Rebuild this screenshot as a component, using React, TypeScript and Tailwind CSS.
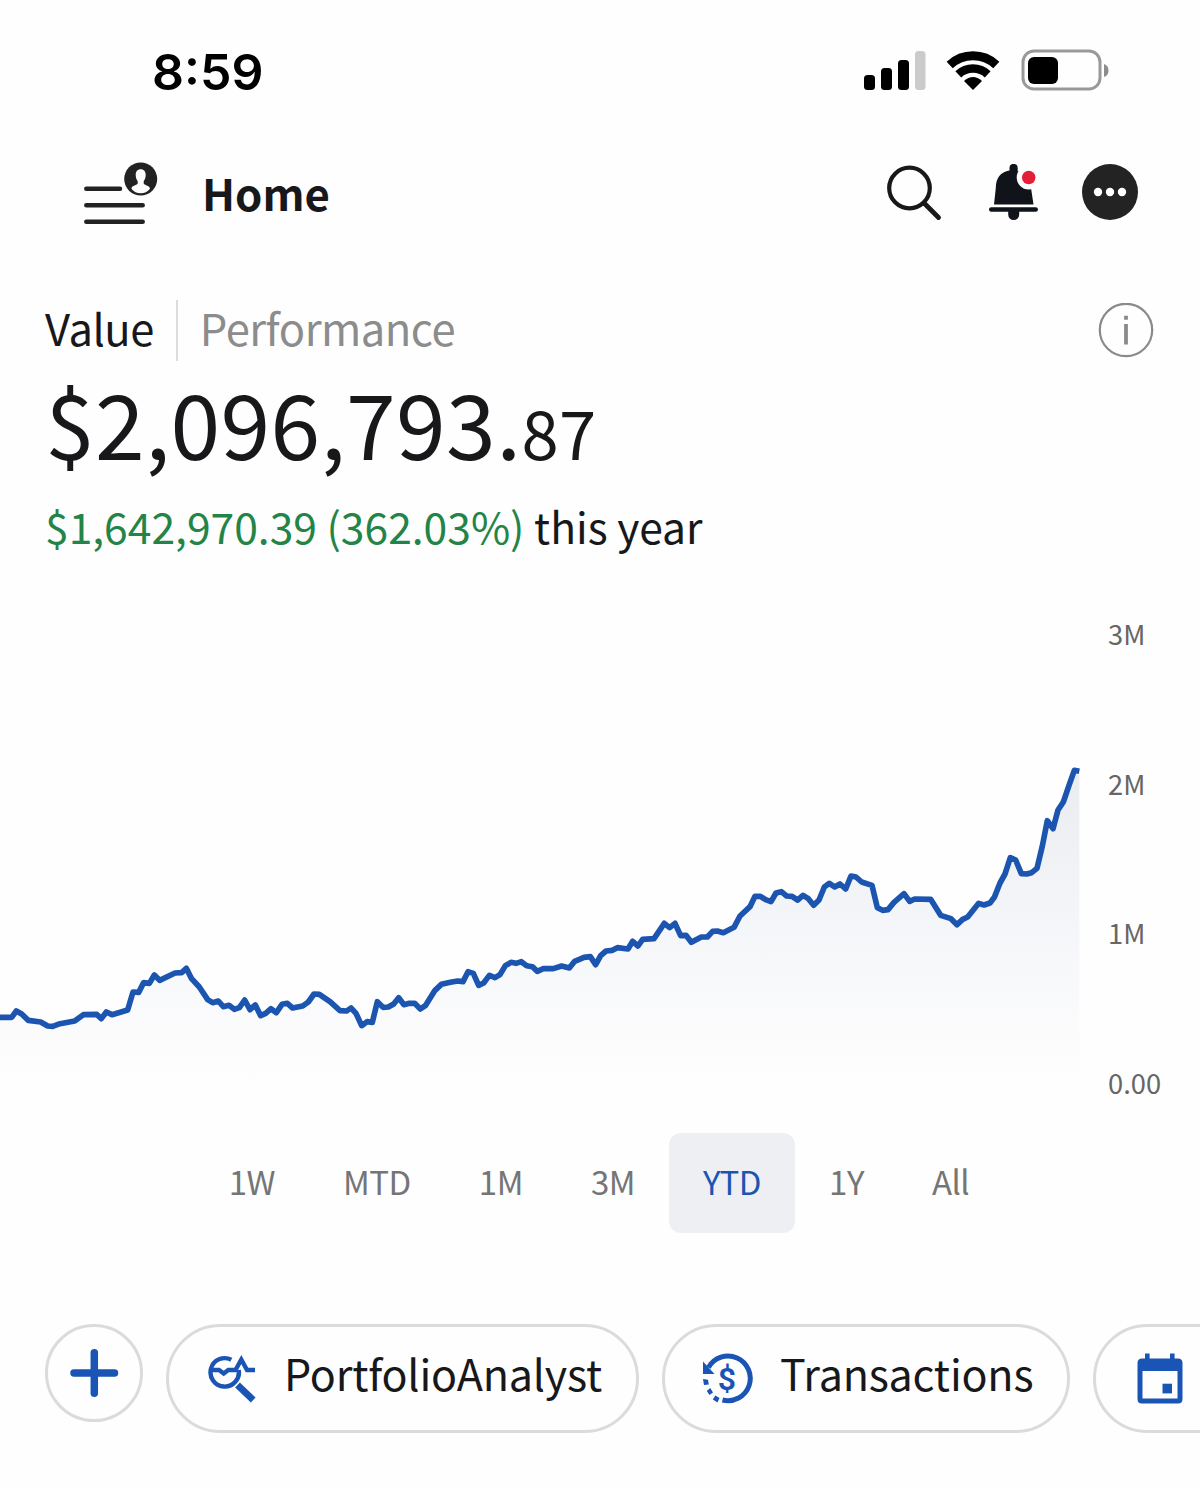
const SERIES: [number, number][] = [
  [0, 832], [35, 832], [49, 813], [65, 822], [85, 841], [122, 846], [143, 858], [158, 859], [180, 851], [224, 843],
  [250, 824], [290, 823], [304, 836], [319, 816], [336, 824], [383, 810], [399, 756], [416, 757], [431, 728], [448, 730],
  [463, 705], [479, 721], [525, 699], [545, 698], [559, 685], [574, 715], [598, 741], [623, 779], [638, 788], [655, 783],
  [670, 800], [687, 796], [703, 808], [718, 803], [734, 780], [750, 809], [766, 795], [782, 827], [797, 820], [813, 806],
  [829, 818], [846, 793], [862, 790], [878, 804], [908, 798], [925, 786], [942, 762], [958, 763], [990, 785], [1020, 812],
  [1040, 813], [1053, 804], [1068, 820], [1085, 857], [1101, 845], [1117, 847], [1132, 785], [1149, 802], [1165, 801],
  [1181, 792], [1196, 773], [1212, 794], [1228, 790], [1244, 790], [1261, 807], [1277, 796], [1305, 751], [1324, 733],
  [1355, 726], [1373, 723], [1389, 725], [1404, 695], [1420, 700], [1436, 736], [1451, 729], [1468, 706], [1485, 713],
  [1500, 704], [1516, 677], [1533, 667], [1548, 670], [1564, 665], [1580, 677], [1597, 680], [1612, 694], [1630, 686],
  [1660, 686], [1685, 678], [1708, 684], [1724, 664], [1752, 652], [1771, 650], [1787, 674], [1802, 647], [1818, 633],
  [1837, 631], [1852, 623], [1884, 627], [1898, 604], [1914, 618], [1928, 598], [1962, 596], [1993, 550], [2009, 563],
  [2025, 550], [2042, 587], [2058, 586], [2074, 607], [2104, 591], [2122, 591], [2138, 574], [2152, 573], [2170, 578],
  [2202, 562], [2220, 528], [2250, 500], [2265, 469], [2281, 469], [2297, 479], [2313, 485], [2328, 459], [2344, 455],
  [2360, 468], [2376, 469], [2393, 480], [2409, 466], [2425, 476], [2441, 496], [2457, 480], [2473, 441], [2488, 430],
  [2504, 441], [2520, 432], [2537, 447], [2553, 408], [2568, 411], [2585, 426], [2616, 436], [2632, 503], [2648, 511],
  [2664, 509], [2682, 487], [2712, 461], [2729, 484], [2744, 477], [2792, 478], [2822, 526], [2853, 536], [2871, 554],
  [2888, 538], [2903, 531], [2936, 490], [2952, 495], [2970, 489], [2983, 472], [3000, 429], [3015, 402], [3031, 353],
  [3047, 360], [3064, 401], [3080, 402], [3095, 398], [3111, 385], [3127, 318], [3142, 242], [3159, 266], [3174, 210],
  [3190, 186], [3206, 139], [3223, 91], [3238, 94],
];

const RANGES = ["1W", "MTD", "1M", "3M", "YTD", "1Y", "All"];

function StatusBar() {
  return (
    <div className="flex h-[142px] items-center justify-between pl-[152px] pr-[91px]">
      <span className="font-['Inter'] text-[50px] font-semibold leading-none text-black pt-[1px]">8:59</span>
      <div className="flex items-center pb-[2px]">
        <svg width="62" height="40" viewBox="0 0 62 40">
          <rect x="0" y="25" width="11" height="15" rx="3.5" />
          <rect x="17" y="18" width="11" height="22" rx="3.5" />
          <rect x="34" y="10" width="11" height="30" rx="3.5" />
          <rect x="51" y="1" width="10.5" height="39" rx="3.5" fill="#cbcbcb" />
        </svg>
        <svg width="54" height="40" viewBox="0 0 54 40" className="ml-5" fill="none" stroke="#000">
          <path d="M3.7 15A34.2 34.2 0 0 1 50.3 15" strokeWidth="9" />
          <path d="M12.3 24.3A21.5 21.5 0 0 1 41.7 24.3" strokeWidth="8.5" />
          <path d="M27 40L18 31Q27 23 36 31Z" fill="#000" stroke="none" />
        </svg>
        <svg width="88" height="42" viewBox="0 0 88 42" className="ml-[21px]">
          <rect x="2" y="2" width="77" height="38" rx="11" fill="none" stroke="#999" strokeWidth="3" />
          <rect x="7" y="8" width="30" height="27" rx="6" />
          <path d="M83 15Q87.500 16.500 87.500 21.500T83 28Z" fill="#8c8c8c" />
        </svg>
      </div>
    </div>
  );
}

function Header() {
  return (
    <header className="flex h-[102px] items-center pl-[84px] pr-[62px]">
      <svg width="74" height="64" viewBox="0 0 74 64" stroke="#222" strokeWidth="4.500" strokeLinecap="round">
        <path d="M2.300 27.700H36M2.300 44.200H58.700M2.300 60.700H58.700" />
        <circle cx="56.700" cy="18" r="18.500" fill="#fefefe" stroke="none" />
        <circle cx="56.700" cy="18" r="16.500" fill="#222" stroke="none" />
        <path
          d="M56.700 8.200C60 8.200 61.800 10.600 61.700 14C61.600 17 60.700 18.800 59.700 20.200V22.500C60 24.300 65.500 24 66 27.800C63.500 30.800 60.500 32.300 56.700 32.300C52.900 32.300 49.900 30.800 47.400 27.800C47.900 24 53.400 24.300 53.700 22.500V20.200C52.700 18.800 51.800 17 51.700 14C51.600 10.600 53.400 8.200 56.700 8.200Z"
          fill="#fefefe"
          stroke="none"
        />
      </svg>
      <h1 className="ml-[44px] text-[43.700px] font-semibold leading-none text-[#18181a]">Home</h1>
      <div className="ml-auto flex items-center">
        <svg width="56" height="56" viewBox="0 0 56 56" fill="none" stroke="#18181a" strokeLinecap="round">
          <circle cx="23.500" cy="23" r="20.300" strokeWidth="4.200" />
          <path d="M38.500 38.500L52.500 52.500" strokeWidth="4.800" />
        </svg>
        <svg width="50" height="58" viewBox="0 0 50 58" className="ml-[47px]">
          <path d="M20.500 4A4.100 4.100 0 0 1 28.700 4V7C36 9 41.500 15 42 24L44.500 40.500H5L6.800 24C6.800 14 11.500 8 20.500 6.500Z" fill="#10131a" />
          <circle cx="39.700" cy="13.500" r="12" fill="#fefefe" />
          <circle cx="39.700" cy="13.500" r="6.800" fill="#e51e38" />
          <path d="M2.200 45.500H46.700" stroke="#10131a" strokeWidth="4.500" strokeLinecap="round" />
          <path d="M19.200 46H30.200V50.500A5.500 5.500 0 0 1 19.200 50.500Z" fill="#10131a" />
        </svg>
        <svg width="56" height="56" viewBox="0 0 56 56" className="ml-[43px] -mt-[2px]">
          <circle cx="28" cy="28" r="28" fill="#232323" />
          <circle cx="16" cy="28" r="4.200" fill="#fff" />
          <circle cx="28" cy="28" r="4.200" fill="#fff" />
          <circle cx="40" cy="28" r="4.200" fill="#fff" />
        </svg>
      </div>
    </header>
  );
}

function Summary() {
  return (
    <section className="pt-14">
      <div className="flex h-[61px] items-center pl-[45px] pr-[46px] text-[43.500px] leading-none tracking-[-0.5px]">
        <span className="pb-[6px] text-[#18181a]">Value</span>
        <span className="ml-[22px] h-full w-[2px] bg-[#dcdcdc]" />
        <span className="ml-[22px] pb-[6px] text-[#8c8c8c]">Performance</span>
        <svg width="56" height="56" viewBox="0 0 56 56" className="ml-auto" fill="none" stroke="#8a8a8a">
          <circle cx="28" cy="27" r="26.200" strokeWidth="2.200" />
          <path d="M28 12.700V16.700M28 21V41.500" strokeWidth="3.800" />
        </svg>
      </div>
      <p className="mt-[10px] h-[100px] whitespace-nowrap pl-[45px] text-[89.500px] leading-[100px] tracking-[0.4px] text-[#18181a]">
        $2,096,793.<span className="text-[67px] leading-none">87</span>
      </p>
      <p className="mt-[25px] h-[60px] whitespace-nowrap pl-[45px] text-[42.600px] leading-[60px] text-[#18181a]">
        <span className="text-[#238448]">$1,642,970.39 (362.03%)</span> this year
      </p>
    </section>
  );
}

function Chart() {
  const line = SERIES.map(([x, y]) => `${x},${y}`).join(" ");
  return (
    <section className="flex h-[535px] pt-[57px]">
      <svg width="1080" height="360" viewBox="0 0 3240 1080" className="mt-[127px]">
        <defs>
          <linearGradient id="fade" gradientUnits="userSpaceOnUse" x1="0" y1="91" x2="0" y2="1032">
            <stop offset="0" stopColor="#ebecf0" />
            <stop offset="0.500" stopColor="#f5f6f9" />
            <stop offset="1" stopColor="#fefefe" />
          </linearGradient>
        </defs>
        <polygon points={`0,1032 ${line} 3238,1032`} fill="url(#fade)" />
        <polyline points={line} fill="none" stroke="#1b55b0" strokeWidth="17" strokeLinejoin="round" />
      </svg>
      <div className="ml-7 flex h-[489px] flex-col justify-between text-[27.300px] leading-[40px] text-[#666]">
        <span>3M</span>
        <span>2M</span>
        <span>1M</span>
        <span>0.00</span>
      </div>
    </section>
  );
}

function RangeTabs() {
  return (
    <nav className="mt-[42px] flex h-[100px] justify-center pr-[2px] text-[33px] leading-[97px] tracking-[-0.5px] text-[#757575]">
      {RANGES.map((r) => (
        <button key={r} className={r === "YTD" ? "rounded-xl bg-[#edeff3] px-[34px] pb-[3px] text-[#1b55b0]" : "px-[34px] pb-[3px]"}>
          {r}
        </button>
      ))}
    </nav>
  );
}

function AnalystIcon() {
  return (
    <svg width="50" height="50" viewBox="0 0 50 50" fill="none" stroke="#1a54b4" strokeWidth="4.400">
      <path d="M24.300 5.800A14.200 14.200 0 1 0 31.700 16" />
      <path d="M4 16H12L16.700 19.500L21.300 16H28.500L34.300 5.500L40 16H48" />
      <path d="M30.500 31L46.200 46" strokeWidth="6.800" />
    </svg>
  );
}

function TransactionsIcon() {
  return (
    <svg width="52" height="52" viewBox="0 0 52 52" fill="#1a54b4">
      <path d="M6.500 14.500A22.300 22.300 0 1 1 20.500 47" fill="none" stroke="#1a54b4" strokeWidth="5" />
      <path d="M1 8.500V21H12.500Z" />
      <path d="M1 26L6 26.800L6.800 31.500L2 32ZM8.200 35L11 39.500L7.500 42L4.800 38ZM13.300 42.500L17.500 45L15.500 49.500L10.800 46.500Z" />
      <text x="25" y="36.500" textAnchor="middle" fontFamily="Roboto" fontWeight="600" fontSize="32" letterSpacing="0">$</text>
    </svg>
  );
}

function CalendarIcon() {
  return (
    <svg width="46" height="51" viewBox="0 0 46 51" fill="#1a54b4" className="shrink-0">
      <path d="M8 0.500H12.600V8H8ZM33 0.500H37.600V8H33Z" />
      <path fillRule="evenodd" d="M5 5.500H41Q45.500 5.500 45.500 10V46Q45.500 50.500 41 50.500H5Q0.500 50.500 0.500 46V10Q0.500 5.500 5 5.500ZM5.500 18V45.500H40.500V18Z" />
      <rect x="25.500" y="30.700" width="9.500" height="9.700" />
    </svg>
  );
}

function Shortcuts() {
  return (
    <div className="mt-[91px] flex w-[1200px] items-start overflow-hidden pl-[45px] text-[43px] leading-none tracking-[-0.2px] text-[#18181a]">
      <button className="flex size-[98px] shrink-0 items-center justify-center rounded-full border-[3px] border-[#dbdbdb]">
        <svg width="50" height="50" viewBox="0 0 50 50" stroke="#1a54b4" strokeWidth="7.500" strokeLinecap="round">
          <path d="M25.300 4.700V45.300M5 25H45.500" />
        </svg>
      </button>
      <button className="ml-[23px] flex h-[109px] w-[473px] shrink-0 items-center rounded-full border-[3px] border-[#dbdbdb] pl-[38px]">
        <AnalystIcon />
        <span className="ml-[27px] pb-[12px]">PortfolioAnalyst</span>
      </button>
      <button className="ml-[23px] flex h-[109px] w-[408px] shrink-0 items-center rounded-full border-[3px] border-[#dbdbdb] pl-[37px]">
        <TransactionsIcon />
        <span className="ml-[26px] pb-[12px]">Transactions</span>
      </button>
      <button className="ml-[23px] flex h-[109px] w-[300px] shrink-0 items-center rounded-full border-[3px] border-[#dbdbdb] pl-[41px]">
        <CalendarIcon />
      </button>
    </div>
  );
}

export default function App() {
  return (
    <main className="h-[1489px] w-[1200px] overflow-hidden bg-[#fefefe] font-['Noto_Sans_CJK_SC',sans-serif]">
      <StatusBar />
      <Header />
      <Summary />
      <Chart />
      <RangeTabs />
      <Shortcuts />
    </main>
  );
}
